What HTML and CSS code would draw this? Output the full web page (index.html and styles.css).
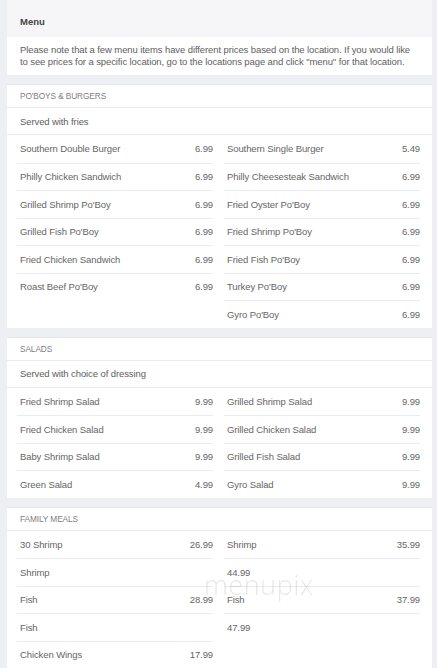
FILE: index.html
```html
<!DOCTYPE html>
<html>
<head>
<meta charset="utf-8">
<link rel="stylesheet" href="styles.css">
</head>
<body>
<div class="page">
  <div class="menu-head">Menu</div>
  <div class="note">Please note that a few menu items have different prices based on the location. If you would like to see prices for a specific location, go to the locations page and click "menu" for that location.</div>

  <section class="sec">
    <div class="sec-head">PO'BOYS &amp; BURGERS</div>
    <div class="sec-sub">Served with fries</div>
    <div class="cols">
      <div class="col">
        <div class="item"><span>Southern Double Burger</span><span>6.99</span></div>
        <div class="item"><span>Philly Chicken Sandwich</span><span>6.99</span></div>
        <div class="item"><span>Grilled Shrimp Po'Boy</span><span>6.99</span></div>
        <div class="item"><span>Grilled Fish Po'Boy</span><span>6.99</span></div>
        <div class="item"><span>Fried Chicken Sandwich</span><span>6.99</span></div>
        <div class="item"><span>Roast Beef Po'Boy</span><span>6.99</span></div>
      </div>
      <div class="col">
        <div class="item"><span>Southern Single Burger</span><span>5.49</span></div>
        <div class="item"><span>Philly Cheesesteak Sandwich</span><span>6.99</span></div>
        <div class="item"><span>Fried Oyster Po'Boy</span><span>6.99</span></div>
        <div class="item"><span>Fried Shrimp Po'Boy</span><span>6.99</span></div>
        <div class="item"><span>Fried Fish Po'Boy</span><span>6.99</span></div>
        <div class="item"><span>Turkey Po'Boy</span><span>6.99</span></div>
        <div class="item"><span>Gyro Po'Boy</span><span>6.99</span></div>
      </div>
    </div>
  </section>

  <section class="sec">
    <div class="sec-head">SALADS</div>
    <div class="sec-sub">Served with choice of dressing</div>
    <div class="cols">
      <div class="col">
        <div class="item"><span>Fried Shrimp Salad</span><span>9.99</span></div>
        <div class="item"><span>Fried Chicken Salad</span><span>9.99</span></div>
        <div class="item"><span>Baby Shrimp Salad</span><span>9.99</span></div>
        <div class="item"><span>Green Salad</span><span>4.99</span></div>
      </div>
      <div class="col">
        <div class="item"><span>Grilled Shrimp Salad</span><span>9.99</span></div>
        <div class="item"><span>Grilled Chicken Salad</span><span>9.99</span></div>
        <div class="item"><span>Grilled Fish Salad</span><span>9.99</span></div>
        <div class="item"><span>Gyro Salad</span><span>9.99</span></div>
      </div>
    </div>
  </section>

  <section class="sec">
    <div class="sec-head">FAMILY MEALS</div>
    <div class="cols">
      <div class="col">
        <div class="item"><span>30 Shrimp</span><span>26.99</span></div>
        <div class="item"><span>Shrimp</span><span></span></div>
        <div class="item"><span>Fish</span><span>28.99</span></div>
        <div class="item"><span>Fish</span><span></span></div>
        <div class="item"><span>Chicken Wings</span><span>17.99</span></div>
      </div>
      <div class="col">
        <div class="item"><span>Shrimp</span><span>35.99</span></div>
        <div class="item"><span>44.99</span><span></span></div>
        <div class="item"><span>Fish</span><span>37.99</span></div>
        <div class="item"><span>47.99</span><span></span></div>
      </div>
    </div>
  </section>
</div>
<div class="watermark">menupix</div>
</body>
</html>
```

FILE: styles.css
```css
html, body {
  margin: 0;
  padding: 0;
}
body {
  background: #eeeff3;
  font-family: "Liberation Sans", Arial, sans-serif;
  font-size: 9.5px;
  letter-spacing: -0.1px;
  color: #666;
  width: 437px;
  height: 668px;
  overflow: hidden;
  position: relative;
}
.page {
  margin: 0 5px 0 7px;
}
.menu-head {
  background: #f6f6f9;
  height: 37px;
  box-sizing: border-box;
  padding: 15px 0 0 13px;
  line-height: 14px;
  font-weight: bold;
  letter-spacing: 0;
  color: #444;
}
.note {
  background: #fff;
  padding: 7px 13px;
  line-height: 12px;
  height: 24px;
  color: #5e5e5e;
}
.sec {
  background: #fff;
  margin-top: 9px;
  border-top: 1px solid #e6e7eb;
}
.sec-head {
  height: 23px;
  box-sizing: border-box;
  padding-left: 13px;
  display: flex;
  align-items: center;
  font-size: 8.3px;
  letter-spacing: -0.1px;
  color: #808080;
  border-bottom: 1px solid #ececef;
}
.sec-sub {
  height: 27px;
  box-sizing: border-box;
  padding-left: 13px;
  display: flex;
  align-items: center;
  color: #5e5e5e;
  border-bottom: 1px solid #ececef;
}
.cols {
  display: grid;
  grid-template-columns: 196px 196px;
  column-gap: 11px;
  padding: 0 12px 0 10px;
}
.item {
  height: 27.5px;
  box-sizing: border-box;
  padding-left: 3px;
  display: flex;
  justify-content: space-between;
  align-items: center;
  border-top: 1px solid #ececef;
}
.item:first-child {
  border-top: none;
}
.watermark {
  position: absolute;
  left: 204px;
  top: 566px;
  font-family: "Open Sans", sans-serif;
  font-weight: 300;
  font-size: 27px;
  letter-spacing: 0.5px;
  color: rgba(0, 0, 0, 0.11);
  pointer-events: none;
}
```
